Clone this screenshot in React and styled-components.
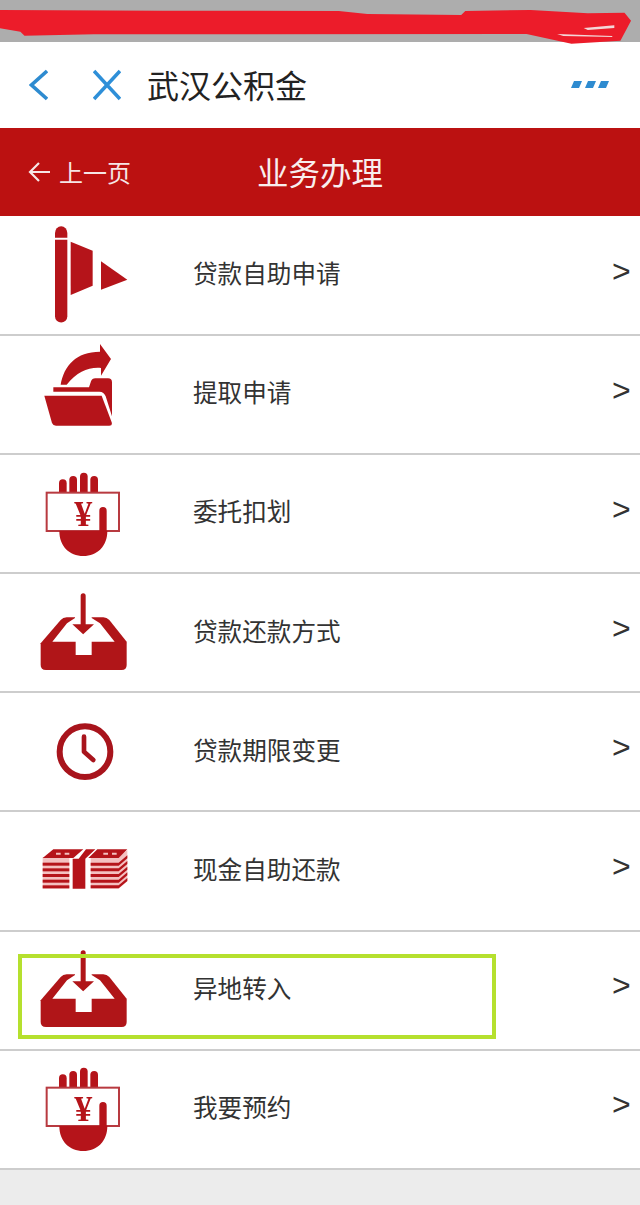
import React from "react";
import styled, { createGlobalStyle } from "styled-components";

const Global = createGlobalStyle`
  html, body { margin: 0; padding: 0; background: #ececec; }
  body { font-family: "Noto Sans CJK SC", "Noto Sans", sans-serif; }
  * { box-sizing: border-box; }
`;

const Page = styled.div`
  width: 640px;
  height: 1205px;
  overflow: hidden;
  position: relative;
  background: #ececec;
  display: flex;
  flex-direction: column;
`;
const StatusBar = styled.div`
  height: 42px;
  flex: none;
  background: #adadad;
`;
const Scribble = styled.svg`
  position: absolute;
  left: 0;
  top: 0;
  width: 640px;
  height: 50px;
  z-index: 2;
`;
const TopNav = styled.header`
  height: 86px;
  flex: none;
  background: #fff;
  display: flex;
  align-items: center;
  padding: 0 31px 0 29px;
`;
const NavIcon = styled.svg`
  flex: none;
  width: ${(p) => p.$w}px;
  height: 34px;
  margin-right: ${(p) => p.$mr || 0}px;
`;
const AppTitle = styled.h1`
  margin: 0;
  flex: 1;
  font-size: 32px;
  font-weight: 400;
  line-height: 1;
  color: #222;
  padding-bottom: 3px;
`;
const Header = styled.div`
  height: 88px;
  flex: none;
  background: #bb1111;
  color: #fff;
  display: grid;
  grid-template-columns: 1fr auto 1fr;
  align-items: center;
`;
const BackLink = styled.div`
  display: flex;
  align-items: center;
  padding-left: 27px;
  gap: 8px;
  font-size: 24px;
  line-height: 1;
  color: #f6e6e6;
`;
const PageTitle = styled.div`
  font-size: 31.5px;
  line-height: 1;
  color: #f8eeee;
`;
const List = styled.ul`
  margin: 0;
  padding: 1px 0 0;
  background: #fff;
  list-style: none;
  flex: none;
`;
const Row = styled.li`
  position: relative;
  height: 119.1px;
  background: #fff;
  border-bottom: 2px solid #cdcdcd;
  display: flex;
  align-items: center;
  padding-left: 20px;
`;
const Icon = styled.svg`
  width: 130px;
  height: 118px;
  flex: none;
  margin-right: 43px;
  filter: blur(0.35px);
`;
const Label = styled.span`
  flex: 1;
  font-size: 24.6px;
  line-height: 1;
  color: #333;
  padding-bottom: 6px;
`;
const Chevron = styled.span`
  flex: none;
  width: 28px;
  font-family: "Liberation Sans", sans-serif;
  font-size: 32px;
  line-height: 1;
  color: #333;
  padding-bottom: 10px;
`;
const Highlight = styled.div`
  position: absolute;
  left: 18px;
  top: 22px;
  width: 478px;
  height: 85px;
  border: 4px solid #b5e02e;
  pointer-events: none;
`;

const RED = "#b5141a";

const Flag = () => (
  <Icon viewBox="0 -6 390 354" fill={RED}>
    <path d="M105 42a18.500 20 0 0 1 37 0v14h-37z" />
    <path d="M105 62h37v230a18.500 18.500 0 0 1-37 0z" />
    <path d="M152 68l66 27v105l-66 28z" />
    <path d="M243 127l79 55-79 30z" />
  </Icon>
);

const Folder = () => (
  <Icon viewBox="0 351 390 354" fill={RED}>
    <path d="M122 497C132 440 168 398 240 398L240 375L273 420L243 470L243 447C205 444 172 458 140 497Z" />
    <path d="M100 518V505H207L213 487Q216 478 226 478H264Q276 478 276 490V592L257 532Q252 518 238 518Z" />
    <path d="M73 530H245L275 610Q278 620 268 620H108Q99 620 96 612Z" />
  </Icon>
);

const Hand = ({ view }) => (
  <Icon viewBox={view} fill={RED}>
    <rect x="117" y="58" width="23" height="60" rx="11.500" />
    <rect x="148" y="48" width="23" height="70" rx="11.500" />
    <rect x="180" y="38" width="23" height="80" rx="11.500" />
    <rect x="211" y="48" width="23" height="70" rx="11.500" />
    <rect x="80" y="98" width="217" height="115" fill="#fff" stroke="#b83a40" strokeWidth="6" />
    <text x="190" y="197" textAnchor="middle" fontFamily="Liberation Serif, serif" fontWeight="700" fontSize="108">¥</text>
    <path d="M118 213H238V152a11 11 0 0 1 22 0V213H262C262 258 232 288 190 288C148 288 118 258 118 213Z" />
  </Icon>
);

const Inbox = ({ view }) => (
  <Icon viewBox={view} fill="#b01518">
    <path d="M62 550L122 480Q129 472 140 472H250Q260 472 268 480L320 545V615Q320 630 305 630H78Q62 630 62 615Z" />
    <path fill="#fff" d="M97 545L141 490L165 474V460H215V474L240 490L284 545H215V585H167V545Z" />
    <path d="M182 407a7.500 7.500 0 0 1 15 0V493H222L189.500 523L157 493H182Z" />
  </Icon>
);

const Clock = () => (
  <Icon viewBox="0 -21 390 354" fill="none" stroke="#a8141c">
    <circle cx="195" cy="155" r="76" strokeWidth="18" />
    <path d="M192 110V155L220 180" strokeWidth="14" strokeLinecap="round" strokeLinejoin="round" />
  </Icon>
);

const stripeYs = [478, 495, 512, 529, 546];
const Cash = () => (
  <Icon viewBox="0 336 390 354" fill={RED}>
    <path fill="#f4c0c0" d="M68 472H148V566H68ZM212 472H296L322 450V544L296 566H212Z" />
    <path d="M100 448H190L160 474H68Z" />
    <path d="M232 448H322L296 474H205Z" />
    <path d="M108 458h14v6h-14zM134 458h14v6h-14zM250 458h14v6h-14zM276 458h14v6h-14z" fill="#f4c0c0" />
    <path d="M198 448H226L196 476V566H158V476H176Z" />
    {stripeYs.map((y) => (
      <g key={y}>
        <rect x="68" y={y + 10} width="80" height="9" />
        <path d={`M212 ${y + 10}H296L322 ${y - 12}V${y - 3}L296 ${y + 19}H212Z`} />
      </g>
    ))}
  </Icon>
);

const rows = [
  { label: "贷款自助申请", icon: <Flag /> },
  { label: "提取申请", icon: <Folder /> },
  { label: "委托扣划", icon: <Hand view="0 -15 390 354" /> },
  { label: "贷款还款方式", icon: <Inbox view="0 342 390 354" /> },
  { label: "贷款期限变更", icon: <Clock /> },
  { label: "现金自助还款", icon: <Cash /> },
  { label: "异地转入", icon: <Inbox view="0 342 390 354" />, marked: true },
  { label: "我要预约", icon: <Hand view="0 -15 390 354" /> },
];

export default function App() {
  return (
    <Page>
      <Global />
      <StatusBar />
      <Scribble viewBox="0 0 1568 150" preserveAspectRatio="none">
        <path
          fill="#ec1c2a"
          d="M0 30L400 32L830 33L900 42L1130 45L1140 33L1300 30L1440 40L1530 38L1546 62L1520 122L1400 131L1290 102L230 103L60 107L50 95L0 85Z"
        />
        <path fill="#f3d7d8" d="M1430 84L1505 76L1505 84L1440 90Z" />
        <path fill="#f3d7d8" d="M1365 102L1500 108L1500 111L1380 108Z" />
      </Scribble>
      <TopNav>
        <NavIcon $w={19} $mr={45} viewBox="0 0 19 34" fill="none" stroke="#2e8bd0" strokeWidth="3.600">
          <path d="M18 3L2.500 17L18 31" />
        </NavIcon>
        <NavIcon $w={28} $mr={26} viewBox="0 0 28 34" fill="none" stroke="#2e8fd8" strokeWidth="3.600">
          <path d="M1 3L27 31M27 3L1 31" />
        </NavIcon>
        <AppTitle>武汉公积金</AppTitle>
        <NavIcon $w={38} viewBox="0 0 38 34" fill="#2e8bd0">
          <path d="M3 13h8l-3 7H0zM17 13h8l-3 7h-8zM30 13h8l-3 7h-8z" />
        </NavIcon>
      </TopNav>
      <Header>
        <BackLink>
          <svg width="24" height="24" viewBox="0 0 24 24" fill="none" stroke="#f6e6e6" strokeWidth="2.200">
            <path d="M23 12H3M12 3L3 12L12 21" />
          </svg>
          上一页
        </BackLink>
        <PageTitle>业务办理</PageTitle>
        <span />
      </Header>
      <List>
        {rows.map((r) => (
          <Row key={r.label}>
            {r.icon}
            <Label>{r.label}</Label>
            <Chevron>&gt;</Chevron>
            {r.marked && <Highlight />}
          </Row>
        ))}
      </List>
    </Page>
  );
}
